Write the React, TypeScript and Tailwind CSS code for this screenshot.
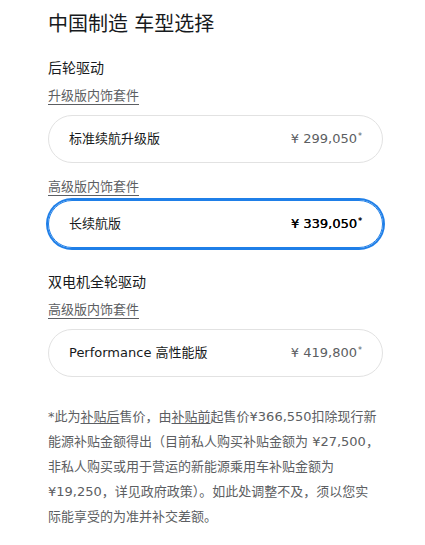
import React from "react"

const font = {
  fontFamily: '"DejaVu Sans", "Noto Sans CJK SC", sans-serif',
}

interface TrimCardProps {
  name: string
  price: string
  selected?: boolean
}

function TrimCard({ name, price, selected }: TrimCardProps) {
  return (
    <div
      className={
        selected
          ? "flex h-[48px] w-[335px] items-center justify-between rounded-full border border-[#1f7fe8] pl-5 pr-5 ring-2 ring-[#1f7fe8]"
          : "flex h-[48px] w-[335px] items-center justify-between rounded-full border border-[#e2e2e2] pl-5 pr-5"
      }
    >
      <span className="text-[13px] text-[#171a20]">{name}</span>
      <span
        className={
          selected
            ? "text-[13px] font-medium text-[#000000] [text-shadow:0.3px_0_0_#000]"
            : "text-[13px] text-[#5c5e62]"
        }
      >
        {price}
        <sup className="ml-[1px] text-[8px]">*</sup>
      </span>
    </div>
  )
}

function PackageLink({ label }: { label: string }) {
  return (
    <span className="inline-block self-start border-b border-[#5c5e62] text-[13px] leading-[16px] text-[#5c5e62]">
      {label}
    </span>
  )
}

export default function App() {
  return (
    <div className="min-h-[545px] w-[425px] bg-white px-12 pt-[10px]" style={font}>
      <h1 className="text-[20px] leading-[28px] text-[#171a20]">中国制造 车型选择</h1>

      <div className="mt-5 flex flex-col">
        <h2 className="text-[14px] leading-[20px] text-[#171a20]">后轮驱动</h2>
        <div className="mt-[10px] flex">
          <PackageLink label="升级版内饰套件" />
        </div>
        <div className="mt-[10px]">
          <TrimCard name="标准续航升级版" price="¥ 299,050" />
        </div>
        <div className="mt-4 flex">
          <PackageLink label="高级版内饰套件" />
        </div>
        <div className="mt-1">
          <TrimCard name="长续航版" price="¥ 339,050" selected />
        </div>
      </div>

      <div className="mt-6 flex flex-col">
        <h2 className="text-[14px] leading-[20px] text-[#171a20]">双电机全轮驱动</h2>
        <div className="mt-[10px] flex">
          <PackageLink label="高级版内饰套件" />
        </div>
        <div className="mt-[10px]">
          <TrimCard name="Performance 高性能版" price="¥ 419,800" />
        </div>
      </div>

      <div className="mt-[27px] text-[13px] leading-[25px] text-[#5c5e62]">
        <p className="whitespace-nowrap">
          *此为<span className="underline underline-offset-2">补贴后</span>售价，由
          <span className="underline underline-offset-2">补贴前</span>起售价¥366,550扣除现行新
        </p>
        <p className="whitespace-nowrap">能源补贴金额得出（目前私人购买补贴金额为 ¥27,500，</p>
        <p className="whitespace-nowrap">非私人购买或用于营运的新能源乘用车补贴金额为</p>
        <p className="whitespace-nowrap">¥19,250，详见政府政策）。如此处调整不及，须以您实</p>
        <p className="whitespace-nowrap">际能享受的为准并补交差额。</p>
      </div>
    </div>
  )
}
